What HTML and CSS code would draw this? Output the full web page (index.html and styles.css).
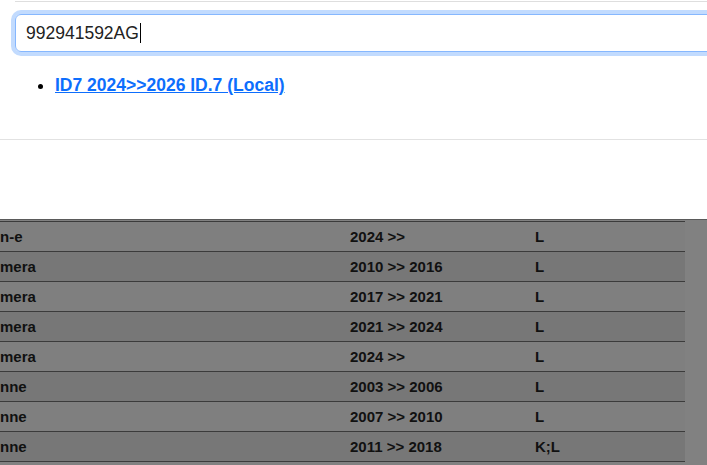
FILE: index.html
```html
<!DOCTYPE html>
<html>
<head lang="en">
    <meta charset="UTF-8">
    <title>Search</title>
    <link rel="stylesheet" href="styles.css">
</head>
<body>
<div class="panel">
    <div class="topline"></div>
    <div class="search">
        <div class="field"><span class="val">992941592AG</span><span class="caret"></span></div>
    </div>
    <ul class="results">
        <li><a href="#">ID7 2024&gt;&gt;2026 ID.7 (Local)</a></li>
    </ul>
    <div class="sep"></div>
</div>
<div class="shade">
    <table class="list">
        <tr><td class="c1">n-e</td><td class="c2">2024 &gt;&gt;</td><td>L</td></tr>
        <tr><td class="c1">mera</td><td class="c2">2010 &gt;&gt; 2016</td><td>L</td></tr>
        <tr><td class="c1">mera</td><td class="c2">2017 &gt;&gt; 2021</td><td>L</td></tr>
        <tr><td class="c1">mera</td><td class="c2">2021 &gt;&gt; 2024</td><td>L</td></tr>
        <tr><td class="c1">mera</td><td class="c2">2024 &gt;&gt;</td><td>L</td></tr>
        <tr><td class="c1">nne</td><td class="c2">2003 &gt;&gt; 2006</td><td>L</td></tr>
        <tr><td class="c1">nne</td><td class="c2">2007 &gt;&gt; 2010</td><td>L</td></tr>
        <tr><td class="c1">nne</td><td class="c2">2011 &gt;&gt; 2018</td><td>K;L</td></tr>
    </table>
</div>
</body>
</html>
```
FILE: styles.css
```css
body{margin:0;padding:0;overflow:hidden;font-family:"Liberation Sans",Arial,sans-serif;background:#fff;}
.panel{height:218px;background:#fff;}
.topline{height:1px;background:#dedede;margin:1px 0 0 15px;}
.search{padding:12px 0 0 15px;}
.field{width:720px;height:36px;border:1px solid #86b7fe;border-radius:6px;box-shadow:0 0 0 4px #c2dbfe;padding:0 10px;box-sizing:content-box;display:flex;align-items:center;font-size:17.5px;color:#222;}
.caret{display:inline-block;width:1px;height:20px;background:#000;margin-left:1px;}
.results{margin:21px 0 0;padding:0 0 0 55px;font-size:17.5px;line-height:24px;}
.results a{color:#0d6efd;font-weight:bold;text-decoration:underline;}
.sep{height:1px;background:#e2e2e2;margin-top:42px;}
.shade{background:#818181;border-top:1px solid #5a5a5a;height:245px;padding-top:1px;}
.list{width:685px;border-collapse:collapse;border-top:1px solid #3b3b3b;font-size:15px;font-weight:bold;color:#111;}
.list td{height:29px;padding:0;border-bottom:1px solid #3b3b3b;}
.list tr{background:#7f7f7f;}
.list tr:nth-child(even){background:#777;}
.list .c1{width:350px;}
.list .c2{width:185px;}
```
